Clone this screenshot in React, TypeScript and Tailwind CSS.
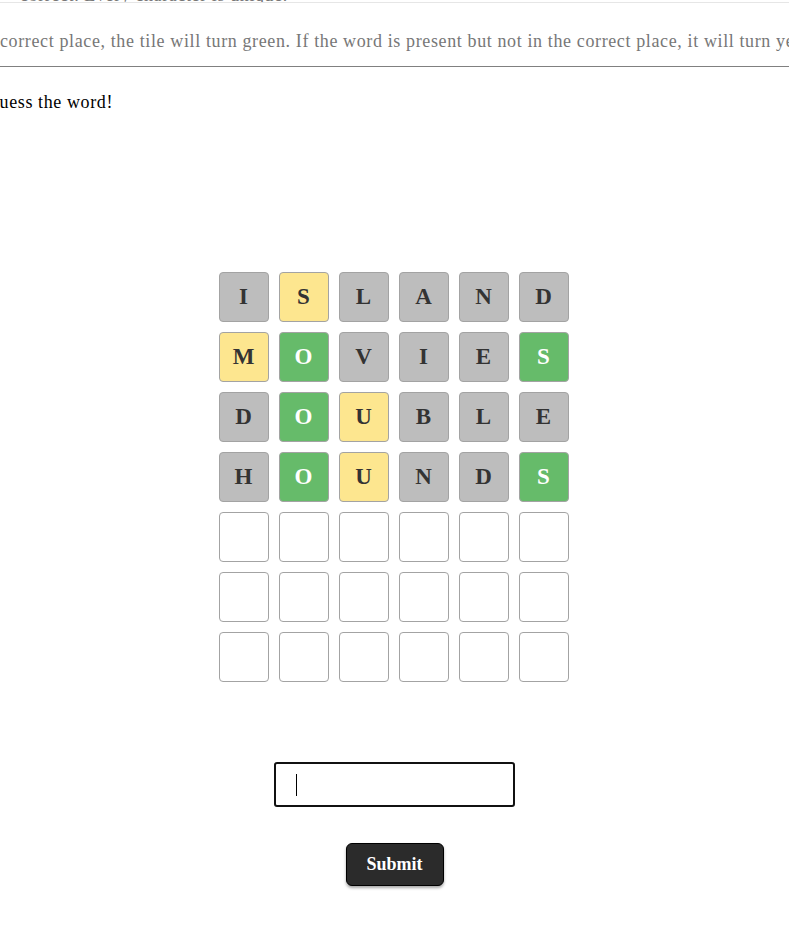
import React from 'react';

type Tile = { l: string; s: 'g' | 'y' | 'x' | 'e' };

const rows: Tile[][] = [
  [
    { l: 'I', s: 'x' },
    { l: 'S', s: 'y' },
    { l: 'L', s: 'x' },
    { l: 'A', s: 'x' },
    { l: 'N', s: 'x' },
    { l: 'D', s: 'x' },
  ],
  [
    { l: 'M', s: 'y' },
    { l: 'O', s: 'g' },
    { l: 'V', s: 'x' },
    { l: 'I', s: 'x' },
    { l: 'E', s: 'x' },
    { l: 'S', s: 'g' },
  ],
  [
    { l: 'D', s: 'x' },
    { l: 'O', s: 'g' },
    { l: 'U', s: 'y' },
    { l: 'B', s: 'x' },
    { l: 'L', s: 'x' },
    { l: 'E', s: 'x' },
  ],
  [
    { l: 'H', s: 'x' },
    { l: 'O', s: 'g' },
    { l: 'U', s: 'y' },
    { l: 'N', s: 'x' },
    { l: 'D', s: 'x' },
    { l: 'S', s: 'g' },
  ],
];

const empty: Tile[] = Array.from({ length: 6 }, () => ({ l: '', s: 'e' as const }));
const board = [...rows, empty, empty, empty];

const tileClass = {
  g: 'bg-[#66bb6a] text-white',
  y: 'bg-[#fde68f] text-[#333]',
  x: 'bg-[#bdbdbd] text-[#333]',
  e: 'bg-white',
};

const App: React.FC = () => {
  return (
    <div className="w-[789px] h-[939px] overflow-hidden bg-white font-['Liberation_Serif','DejaVu_Serif',serif]">
      <div className="h-[3px] overflow-hidden border-b border-[#e6e6e6]">
        <p className="-mt-[18px] ml-[20px] whitespace-nowrap text-[18px] tracking-[0.6px] text-[#777]">
          correct. Every character is unique.
        </p>
      </div>

      <p className="mt-[26px] whitespace-nowrap text-[18px] leading-[24px] tracking-[0.62px] text-[#777]">
        correct place, the tile will turn green. If the word is present but not in the correct place, it will turn yellow.
      </p>

      <hr className="mt-[13px] border-0 border-t border-[#808080]" />

      <p className="mt-[24px] -ml-[14px] text-[18px] leading-[22px] tracking-[0.6px] text-black">Guess the word!</p>

      <div className="mt-[159px] pr-[2px] flex flex-col items-center gap-[10px]">
        {board.map((row, i) => (
          <div key={i} className="flex gap-[10px]">
            {row.map((t, j) => (
              <div
                key={j}
                className={`w-[50px] h-[50px] rounded-[4px] border border-[#a3a3a3] flex items-center justify-center text-[23px] font-bold ${tileClass[t.s]}`}
              >
                {t.l}
              </div>
            ))}
          </div>
        ))}
      </div>

      <div className="mt-[80px] flex justify-center">
        <div className="w-[241px] h-[45px] rounded-[3px] border-2 border-[#111] flex items-center pl-[20px]">
          <span className="block w-px h-[22px] bg-black" />
        </div>
      </div>

      <div className="mt-[36px] flex justify-center">
        <button className="w-[98px] h-[43px] rounded-[6px] border border-black bg-[#2b2b2b] text-white text-[18px] font-bold shadow-[0_2px_3px_rgba(0,0,0,0.35)]">
          Submit
        </button>
      </div>
    </div>
  );
};

export default App;
